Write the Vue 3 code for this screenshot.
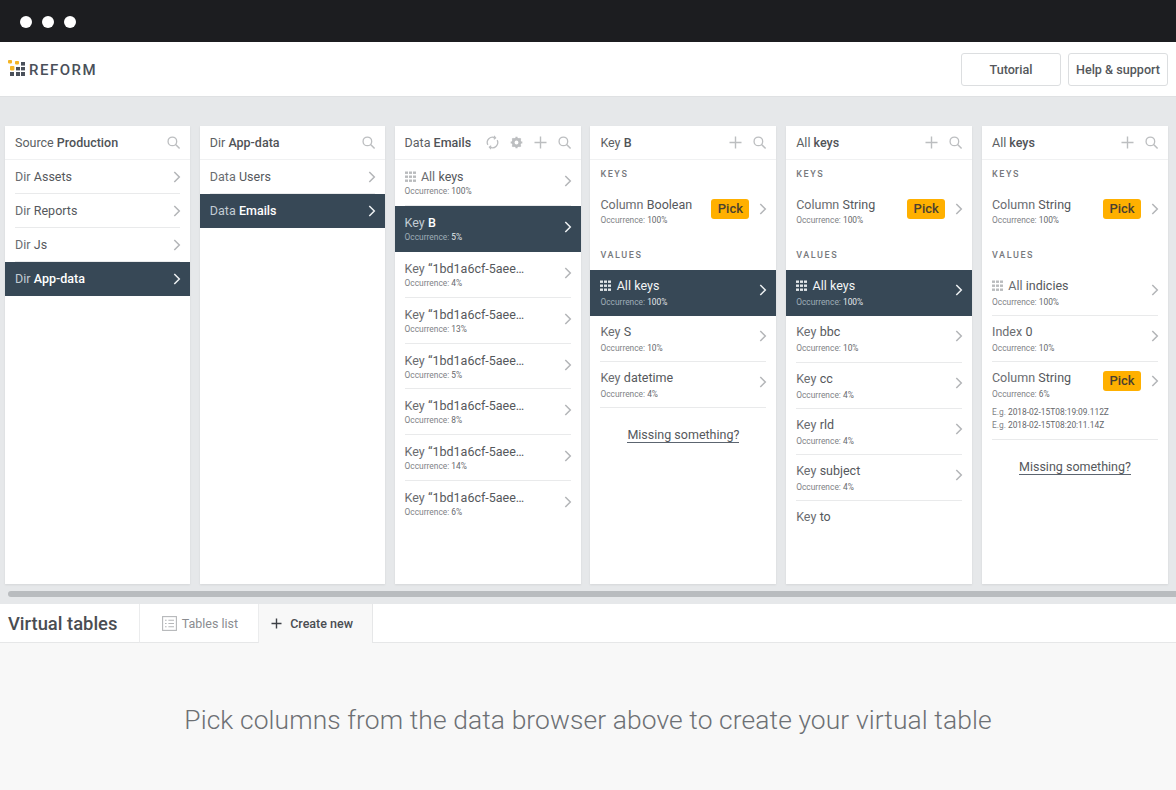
<script setup>
const k = (name, occ, extra = {}) => ({ name, occ, ...extra })
const keyRows = [4, 13, 5, 8, 14, 6].map((o, i) => k(['Key', '“1bd1a6cf-5aee…'], o, { last: i === 5 }))
const columns = [
  { title: ['Source', 'Production'], icons: ['search'], simple: true, rows: [
    { name: ['Dir', 'Assets'] }, { name: ['Dir', 'Reports'] }, { name: ['Dir', 'Js'] }, { name: ['Dir', 'App-data'], active: true, last: true } ] },
  { title: ['Dir', 'App-data'], icons: ['search'], simple: true, rows: [
    { name: ['Data', 'Users'] }, { name: ['Data', 'Emails'], active: true, last: true } ] },
  { title: ['Data', 'Emails'], icons: ['sync', 'gear', 'plus', 'search'], cls: 'flat', rows: [
    k(['All', 'keys'], 100, { grid: true }), k(['Key', 'B'], 5, { active: true }), ...keyRows ] },
  { title: ['Key', 'B'], icons: ['plus', 'search'], keys: k(['Column', 'Boolean'], 100), rows: [
    k(['All', 'keys'], 100, { grid: true, active: true }), k(['Key', 'S'], 10), k(['Key', 'datetime'], 4) ], missing: true },
  { title: ['All', 'keys'], icons: ['plus', 'search'], cls: 'loose', keys: k(['Column', 'String'], 100), rows: [
    k(['All', 'keys'], 100, { grid: true, active: true }), k(['Key', 'bbc'], 10), k(['Key', 'cc'], 4), k(['Key', 'rld'], 4), k(['Key', 'subject'], 4),
    { name: ['Key', 'to'], bare: true } ] },
  { title: ['All', 'keys'], icons: ['plus', 'search'], keys: k(['Column', 'String'], 100), rows: [
    k(['All', 'indicies'], 100, { grid: true }), k(['Index', '0'], 10),
    k(['Column', 'String'], 6, { pick: true, eg: ['2018-02-15T08:19:09.112Z', '2018-02-15T08:20:11.14Z'] }) ], missing: true }
]
const dots = [[0,0],[4,0],[8,0],[0,4],[4,4],[8,4],[0,8],[4,8],[8,8]]
</script>

<template>
  <div class="page">
    <div class="chrome"><i></i><i></i><i></i></div>
    <header class="top">
      <div class="logo">
        <svg width="17" height="17" viewBox="0 0 17 17">
          <rect x="0" y="1" width="4" height="3.4" rx="0.8" fill="#f5b524" />
          <rect x="7" y="2" width="4" height="3.4" rx="0.8" fill="#f5b524" />
          <rect x="2" y="7" width="4.4" height="4.4" rx="0.8" fill="#f5b524" />
          <rect x="13" y="3" width="4" height="3.6" fill="#4a505a" />
          <rect x="8" y="8" width="4" height="3.4" fill="#4a505a" />
          <rect x="13" y="8" width="4" height="3.4" fill="#4a505a" />
          <rect x="2" y="13" width="4" height="4" fill="#4a505a" />
          <rect x="8" y="13" width="4" height="4" fill="#4a505a" />
          <rect x="13" y="13" width="4" height="4" fill="#4a505a" />
        </svg>
        <span>REFORM</span>
      </div>
      <div class="top-actions">
        <button class="btn tutorial">Tutorial</button>
        <button class="btn help">Help &amp; support</button>
      </div>
    </header>

    <section class="browser">
      <div class="cols">
        <div v-for="(c, ci) in columns" :key="ci" class="col" :class="c.cls">
          <div class="col-head">
            <span class="two"><span>{{ c.title[0] }}</span> <b>{{ c.title[1] }}</b></span>
            <div class="head-icons">
              <svg v-for="ic in c.icons" :key="ic" class="hicon" width="16" height="16" viewBox="0 0 16 16" fill="none" stroke="#bcbec0" stroke-width="1.4">
                <template v-if="ic === 'search'"><circle cx="6.8" cy="6.8" r="4.6" /><path d="M10.2 10.2l4.3 4.3" stroke-width="1.6" /></template>
                <path v-else-if="ic === 'plus'" d="M8 1.6v12.8M1.6 8h12.8" stroke-width="1.5" />
                <template v-else-if="ic === 'gear'">
                  <circle cx="8" cy="8" r="3.6" stroke-width="3" />
                  <path d="M8 1.8v2M8 12.2v2M1.8 8h2M12.2 8h2M3.6 3.6l1.4 1.4M11 11l1.4 1.4M3.6 12.4L5 11M11 5l1.4-1.4" stroke-width="2.2" />
                </template>
                <template v-else>
                  <path d="M3 10.5A5.6 5.6 0 0 1 10.5 3" /><path d="M13 5.5A5.6 5.6 0 0 1 5.5 13" />
                  <path d="M9.6 1l1.8 2-2 1.6M6.4 15l-1.8-2 2-1.6" stroke-width="1.2" />
                </template>
              </svg>
            </div>
          </div>

          <template v-if="c.keys">
            <div class="label label-keys">KEYS</div>
            <div class="row keyrow">
              <div class="row-main">
                <div class="name two"><span>{{ c.keys.name[0] }}</span> <b>{{ c.keys.name[1] }}</b></div>
                <div class="occ">Occurrence: <b>{{ c.keys.occ }}%</b></div>
              </div>
              <span class="pick">Pick</span>
              <svg class="chev" width="8" height="12" viewBox="0 0 8 12" fill="none" stroke-width="1.5"><path d="M1.3 1l5 5-5 5" /></svg>
            </div>
            <div class="label label-values">VALUES</div>
          </template>

          <div
            v-for="(r, ri) in c.rows"
            :key="ri"
            class="row"
            :class="{ simple: c.simple, active: r.active, last: r.last, tall: r.eg, bare: r.bare, light: r.grid }"
          >
            <div class="row-main">
              <div class="name two">
                <svg v-if="r.grid" class="gridicon" width="12" height="12" viewBox="0 0 12 12">
                  <rect v-for="(d, di) in dots" :key="di" :x="d[0]" :y="d[1] + 0.5" width="3" height="2.4" />
                </svg>
                <span>{{ r.name[0] }}</span> <b>{{ r.name[1] }}</b>
              </div>
              <div v-if="r.occ" class="occ">Occurrence: <b>{{ r.occ }}%</b></div>
              <div v-for="e in r.eg" :key="e" class="eg">E.g. <b>{{ e }}</b></div>
            </div>
            <span v-if="r.pick" class="pick pick-inline">Pick</span>
            <svg v-if="!r.bare" class="chev" width="8" height="12" viewBox="0 0 8 12" fill="none" stroke-width="1.5"><path d="M1.3 1l5 5-5 5" /></svg>
          </div>

          <div v-if="c.missing" class="missing"><span>Missing something?</span></div>
        </div>
      </div>
      <div class="scroll"></div>
    </section>

    <section class="tables">
      <div class="tabs">
        <div class="tabs-title">Virtual tables</div>
        <div class="tab list">
          <svg width="15" height="15" viewBox="0 0 15 15" fill="none" stroke="#b5b7b9" stroke-width="1.1">
            <rect x="0.6" y="0.6" width="13.8" height="13.8" />
            <path d="M3 4.2h1.6M6.4 4.2h5.6M3 7.5h1.6M6.4 7.5h5.6M3 10.8h1.6M6.4 10.8h5.6" />
          </svg>
          <span>Tables list</span>
        </div>
        <div class="tab create">
          <svg width="11" height="11" viewBox="0 0 11 11" fill="none" stroke="#3d4046" stroke-width="1.4"><path d="M5.5 0.5v10M0.5 5.5h10" /></svg>
          <span>Create new</span>
        </div>
        <div class="tabs-rest"></div>
      </div>
      <div class="empty">Pick columns from the data browser above to create your virtual table</div>
    </section>
  </div>
</template>

<style scoped>
.page { width: 1176px; height: 790px; overflow: hidden; display: flex; flex-direction: column; font-family: Roboto, "Liberation Sans", sans-serif; color: #4a4d52; background: #e6e8ea; }
.chrome { height: 42px; flex: none; background: #1c1d20; display: flex; align-items: center; gap: 10px; padding: 0 0 0 20px; box-sizing: border-box; }
.chrome i { width: 12px; height: 12px; border-radius: 50%; background: #fff; margin-top: 1px; }
.top { height: 55px; flex: none; background: #fff; box-sizing: border-box; display: flex; align-items: center; justify-content: space-between; border-bottom: 1px solid #dfe1e3; }
.logo { display: flex; align-items: center; gap: 4px; padding-left: 8px; }
.logo svg { margin-top: -3px; }
.logo span { font-size: 15px; font-weight: 500; letter-spacing: 1.5px; line-height: 18px; color: #4a505a; margin-top: 2px; }
.top-actions { display: flex; gap: 7px; padding-right: 8px; }
.btn { height: 33px; background: #fff; border: 1px solid #dcdee0; border-radius: 3px; font: 500 12.6px Roboto, sans-serif; color: #55585c; padding: 0; }
.tutorial { width: 100px; }
.help { width: 100px; }
.browser { height: 507px; flex: none; padding: 29px 0 0 5px; box-sizing: border-box; }
.cols { display: flex; gap: 9.8px; }
.col { width: 186px; flex: none; height: 458px; background: #fff; box-shadow: 0 1px 2px rgba(0,0,0,.08); }
.col:nth-child(1), .col:nth-child(2) { width: 185px; }
.col-head { height: 34px; display: flex; align-items: center; justify-content: space-between; padding: 0 10px; border-bottom: 1px solid #f0f1f2; box-sizing: border-box; font-size: 12.5px; color: #5c5f63; }
.two b { font-weight: 500; }
.col-head b { color: #505357; }
.head-icons { display: flex; align-items: center; gap: 9px; margin-right: -1px; }
.hicon { width: 15px; height: 15px; }
.label { font-size: 9px; font-weight: 500; letter-spacing: 1.6px; color: #77797d; padding-left: 10px; }
.label-keys { height: 14px; padding-top: 9px; line-height: 11px; }
.label-values { height: 20px; line-height: 11px; margin-top: 10px; }
.row { height: 46px; position: relative; display: flex; align-items: flex-start; padding: 0 10px; box-sizing: border-box; }
.flat .row { height: 45.9px; }
.loose .row { height: 46.25px; }
.row::after { content: ""; position: absolute; left: 10px; right: 10px; bottom: 0; height: 1px; background: #e9eaeb; }
.row.last::after, .row.active::after, .keyrow::after, .bare::after { display: none; }
.row.simple { height: 34px; align-items: center; }
.row.simple.active { height: 33.5px; }
.row.active { background: #374856; color: #e3e7ea; }
.row-main { flex: 1; min-width: 0; padding-top: 8px; }
.flat .row-main { padding-top: 9px; }
.simple .row-main { padding-top: 0; }
.name { font-size: 12.5px; line-height: 16px; color: #6a6c70; white-space: nowrap; display: flex; align-items: center; gap: 3.3px; }
.name b { font-weight: 400; color: #55585c; }
.active .name { color: #c2ccd3; }
.active .name b { color: #fff; font-weight: 500; }
.active.light .name, .active.light .name b { color: #f4f6f7; font-weight: 400; }
.occ { font-size: 8.4px; line-height: 12px; margin-top: 2px; color: #808286; }
.flat .occ { margin-top: 0; }
.keyrow .occ { margin-top: 1px; }
.occ b { font-weight: 400; color: #66686c; }
.active .occ { color: #9fadb7; }
.active .occ b { color: #e3e7ea; }
.eg { font-size: 8.4px; line-height: 13px; color: #808286; }
.occ + .eg { margin-top: 6px; }
.eg b { font-weight: 400; color: #66686c; }
.row.tall { height: 78px; }
.gridicon { fill: #b9bbbd; flex: none; margin-right: 1px; margin-top: -1px; }
.active .gridicon { fill: #e3e7ea; }
.chev { stroke: #b3b5b8; position: absolute; right: 9px; top: 14px; }
.flat .chev { top: 15px; }
.simple .chev { top: 11px; }
.active .chev { stroke: #eef1f3; }
.row.keyrow { height: 57px; }
.keyrow .row-main { padding-top: 14px; }
.keyrow .chev { top: 20px; }
.pick { position: absolute; right: 27px; top: 16px; width: 38px; height: 20px; background: #ffb000; border-radius: 3px; font-size: 13px; line-height: 20px; text-align: center; color: #4a4030; font-weight: 500; }
.pick.pick-inline { top: 9px; }
.tall .chev { top: 13px; }
.missing { text-align: center; margin-top: 18.5px; font-size: 12.5px; color: #55585c; }
.missing span { border-bottom: 1px solid #5c6570; display: inline-block; line-height: 15.5px; }
.scroll { height: 6px; margin: 7px 0 0 3px; background: #b9bcbf; border-radius: 3px 0 0 3px; }
.tables { flex: 1; display: flex; flex-direction: column; background: #f8f8f8; }
.tabs { height: 39px; flex: none; display: flex; background: #fff; }
.tabs-title { width: 138.7px; flex: none; box-sizing: border-box; padding-left: 8px; font-size: 18.4px; font-weight: 500; line-height: 40px; color: #4a4d52; border-bottom: 1px solid #e6e7e8; }
.tab { display: flex; align-items: center; font-size: 12.5px; box-sizing: border-box; flex: none; }
.list { width: 120.5px; gap: 5px; padding-left: 22px; border-left: 1px solid #ebeced; border-right: 1px solid #ebeced; border-bottom: 1px solid #e6e7e8; color: #8a8c90; }
.create { width: 114px; gap: 8px; padding-left: 12px; background: #f8f8f8; color: #4a4d52; font-weight: 500; border-right: 1px solid #e6e7e8; }
.tabs-rest { flex: 1; border-bottom: 1px solid #e6e7e8; }
.empty { flex: 1; text-align: center; padding-top: 61px; font-size: 26.4px; font-weight: 300; line-height: 32px; color: #6d7074; letter-spacing: 0.1px; }
</style>
